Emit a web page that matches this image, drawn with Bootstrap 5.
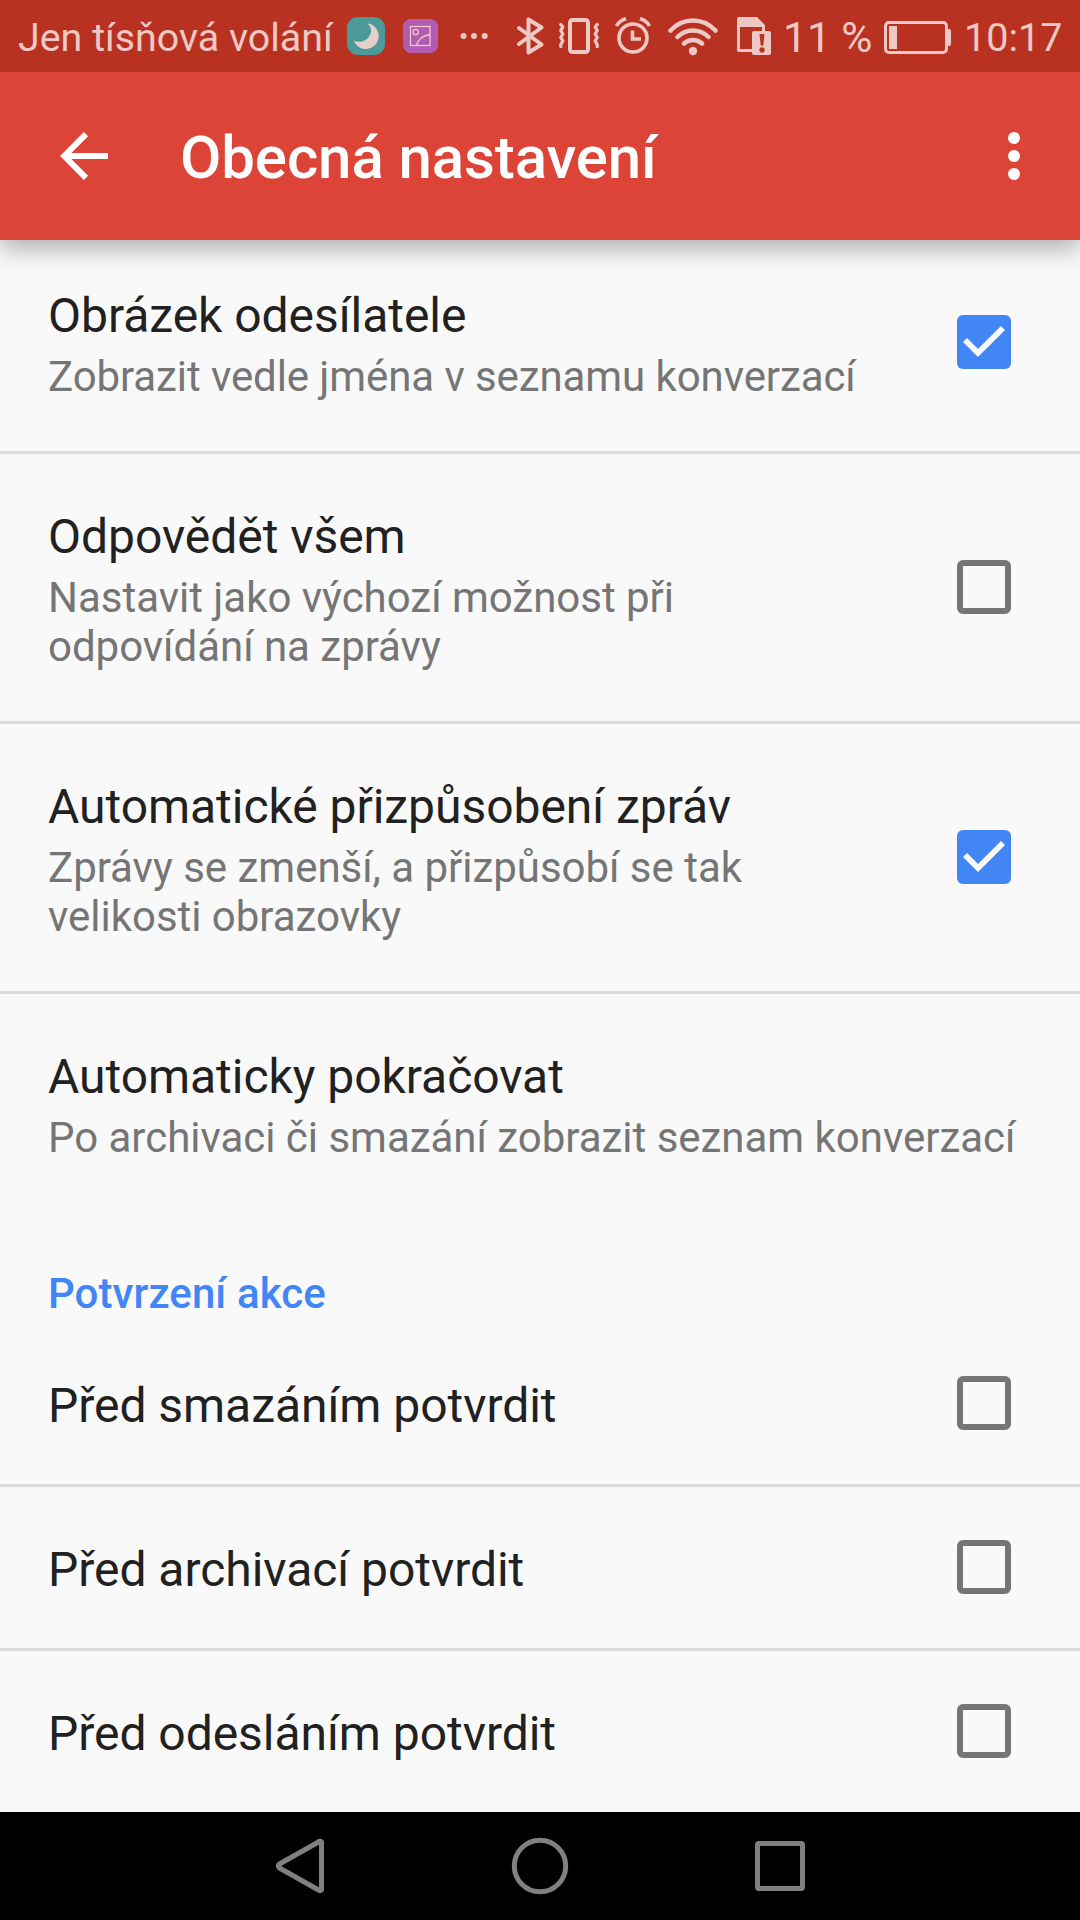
<!DOCTYPE html>
<html lang="cs">
<head>
<meta charset="utf-8">
<meta name="viewport" content="width=device-width, initial-scale=1">
<title>Obecná nastavení</title>
<link href="https://cdn.jsdelivr.net/npm/bootstrap@5.3.0/dist/css/bootstrap.min.css" rel="stylesheet">
<style>
body{font-family:Roboto,"Noto Sans",sans-serif;background:#f9f9f9;color:#212121;width:1080px;height:1920px;overflow:hidden}
svg{display:block;flex:none}
.statusbar{height:72px;background:#b93221;color:#edc8c4;padding-left:18px;z-index:3}
.statusbar span{line-height:75px;white-space:nowrap;flex:none}
.st-carrier{width:329px;font-size:39.4px}
.st-pct{width:101px;font-size:42.5px;margin-left:9px}
.st-time{font-size:39.5px;margin-left:13px}
.appbar{height:168px;background:#db4437;box-shadow:0 10px 22px rgba(0,0,0,.28);z-index:2}
.appbar h1{font-size:60px;font-weight:500;line-height:70px;padding-top:4px;letter-spacing:-.1px;white-space:nowrap}
.settings{margin-top:-7px}
.set-row{padding:50px 69px 0 48px;border:0 solid #dadada;background:#f9f9f9;color:#212121;border-radius:0!important}
.list-group-flush>.set-row{border-width:0 0 3px;border-color:#dadada}
.list-group-flush>.set-row.no-line{border-width:0}
.set-row.h-one{height:221px}
.set-row.h-two{height:270px}
.set-row.h-min{height:164px}
.set-row.h-one.no-line{height:218px}
.set-row.h-min.no-line{height:161px}
.set-title{font-size:48px;line-height:65px;letter-spacing:-.04px;white-space:nowrap}
.set-sub{font-size:42px;line-height:49px;color:#757575;margin-top:4px;letter-spacing:-.02px;white-space:nowrap}
.sub-tight{letter-spacing:-.09px}
.set-cat{height:111px;padding:57px 48px 0;font-size:42px;line-height:49px;font-weight:500;letter-spacing:.08px;color:#4285f4}
.tick{width:54px;height:54px;margin:-51px 0 0!important;border:6px solid #757575;border-radius:6px!important;background-color:transparent;align-self:center;flex:none;box-sizing:border-box}
.tickbox{height:54px;width:54px;align-self:center;margin-top:-51px;flex:none}
.h-one .tickbox{margin-top:-50px}
.navkeys{height:108px;background:#000}
</style>
</head>
<body class="d-flex flex-column">
<header class="statusbar d-flex position-relative">
  <span class="st-carrier">Jen tísňová volání</span>
  <svg width="38" height="72" viewBox="347 0 38 72"><rect x="347" y="17" width="38" height="38" rx="11" fill="#4c9a9a"/><path d="M367 23.300A12.900 12.900 0 1 1 353.700 40.500A12.300 12.300 0 0 0 370.500 34Q373 28 367 23.300Z" fill="#e4cfcb"/></svg>
  <svg width="132" height="72" viewBox="385 0 132 72"><rect x="403" y="19" width="35" height="34" rx="8" fill="#b05cb2"/><g fill="none" stroke="#f0c9c4" stroke-width="1.300"><rect x="410.500" y="26.500" width="19.500" height="19"/><circle cx="415.700" cy="32" r="2.700"/><path d="M416.500 45.500Q419 36 430 34.500"/></g><g fill="#edc8c4"><circle cx="463.500" cy="36" r="3"/><circle cx="474" cy="36" r="3"/><circle cx="484.700" cy="36" r="3"/></g></svg>
  <svg width="42" height="72" viewBox="517 0 42 72"><path d="M519 28 541.500 44.500 528.500 52.500V19.500L541.500 27.500 519 44" fill="none" stroke="#edc8c4" stroke-width="4" stroke-linejoin="round" stroke-linecap="round"/></svg>
  <svg width="56" height="72" viewBox="559 0 56 72"><g fill="none" stroke="#edc8c4" stroke-width="4" stroke-linecap="round" stroke-linejoin="round"><rect x="570" y="20" width="18" height="32" rx="2.500"/><path stroke-width="3.300" d="M560.800 24.500l2 2.500-2 3.500 2 3.500-2 3.500 2 3.500-2 3.500 0 2M597.200 24.500l-2 2.500 2 3.500-2 3.500 2 3.500-2 3.500 2 3.500 0 2"/></g></svg>
  <svg width="53" height="72" viewBox="615 0 53 72"><g fill="none" stroke="#edc8c4"><circle cx="633" cy="38" r="14" stroke-width="3.600"/><path d="M632.500 30.500V39H641" stroke-width="3.600"/><path d="M616.500 26Q619 21 626 18.500M649.500 26Q647 21 640 18.500" stroke-width="3.600"/></g></svg>
  <svg width="69" height="72" viewBox="668 0 69 72"><g fill="none" stroke="#edc8c4" stroke-width="4.500" stroke-linecap="round"><path d="M670.500 30.500Q680 20.500 693 20.500T715.500 30.500M677.500 37Q684 30.500 693 30.500T708.500 37M684 43.500Q688 40 693 40T702 43.500"/></g><circle cx="693" cy="51" r="4.200" fill="#edc8c4"/></svg>
  <svg width="37" height="72" viewBox="737 0 37 72"><path d="M739 17H757L765 25V31H762V27H740V49H752V52H739Q737 52 737 50V19Q737 17 739 17Z" fill="#edc8c4"/><rect x="752" y="31" width="19" height="24" rx="2" fill="#edc8c4"/><path d="M759.500 34H764.500L763.300 45.500H760.700Z" fill="#b93221"/><circle cx="762" cy="50" r="2.700" fill="#b93221"/></svg>
  <span class="st-pct">11 %</span>
  <svg width="67" height="72" viewBox="884 0 67 72"><rect x="885.500" y="22.500" width="61" height="30" rx="3.500" fill="none" stroke="#edc8c4" stroke-width="3"/><path d="M889 26H897V49H889ZM948 29H949.500Q951 29 951 31V44Q951 46 949.500 46H948Z" fill="#edc8c4"/></svg>
  <span class="st-time">10:17</span>
</header>
<nav class="appbar d-flex align-items-center position-relative">
  <svg width="180" height="168" viewBox="0 72 180 168"><path d="M108 156H67M86 134.200 64.300 156 86 177.800" fill="none" stroke="#fff" stroke-width="6"/></svg>
  <h1 class="m-0 text-white">Obecná nastavení</h1>
  <svg class="ms-auto" width="80" height="168" viewBox="1000 72 80 168" fill="#fff"><circle cx="1014" cy="138" r="6"/><circle cx="1014" cy="156" r="6"/><circle cx="1014" cy="174" r="6"/></svg>
</nav>
<main class="settings list-group list-group-flush flex-grow-1">
  <label class="set-row h-one list-group-item d-flex justify-content-between">
    <div><div class="set-title">Obrázek odesílatele</div><div class="set-sub sub-tight">Zobrazit vedle jména v seznamu konverzací</div></div>
    <svg class="tickbox" viewBox="0 0 54 54"><rect width="54" height="54" rx="6" fill="#4285f4"/><path d="M8 25 21 38 46 13" fill="none" stroke="#f9f9f9" stroke-width="5.700"/></svg>
  </label>
  <label class="set-row h-two list-group-item d-flex justify-content-between">
    <div><div class="set-title">Odpovědět všem</div><div class="set-sub">Nastavit jako výchozí možnost při<br>odpovídání na zprávy</div></div>
    <input class="form-check-input tick" type="checkbox">
  </label>
  <label class="set-row h-two list-group-item d-flex justify-content-between">
    <div><div class="set-title">Automatické přizpůsobení zpráv</div><div class="set-sub">Zprávy se zmenší, a přizpůsobí se tak<br>velikosti obrazovky</div></div>
    <svg class="tickbox" viewBox="0 0 54 54"><rect width="54" height="54" rx="6" fill="#4285f4"/><path d="M8 25 21 38 46 13" fill="none" stroke="#f9f9f9" stroke-width="5.700"/></svg>
  </label>
  <div class="set-row h-one no-line list-group-item">
    <div class="set-title">Automaticky pokračovat</div><div class="set-sub">Po archivaci či smazání zobrazit seznam konverzací</div>
  </div>
  <div class="set-cat">Potvrzení akce</div>
  <label class="set-row h-min list-group-item d-flex justify-content-between">
    <div class="set-title">Před smazáním potvrdit</div>
    <input class="form-check-input tick" type="checkbox">
  </label>
  <label class="set-row h-min list-group-item d-flex justify-content-between">
    <div class="set-title">Před archivací potvrdit</div>
    <input class="form-check-input tick" type="checkbox">
  </label>
  <label class="set-row h-min no-line list-group-item d-flex justify-content-between">
    <div class="set-title">Před odesláním potvrdit</div>
    <input class="form-check-input tick" type="checkbox">
  </label>
</main>
<footer class="navkeys d-flex">
  <svg width="1080" height="108" viewBox="0 1812 1080 108" fill="none" stroke="#808080" stroke-width="5" stroke-linejoin="round"><path d="M321.500 1842V1890Q320 1891.500 318.500 1890L279.500 1868Q277 1866 279.500 1864L318.500 1842Q320 1840.500 321.500 1842Z"/><circle cx="540" cy="1866" r="25.700"/><rect x="757.500" y="1843.500" width="45" height="45" rx="1.500"/></svg>
</footer>
<script src="https://cdn.jsdelivr.net/npm/bootstrap@5.3.0/dist/js/bootstrap.bundle.min.js"></script>
</body>
</html>
